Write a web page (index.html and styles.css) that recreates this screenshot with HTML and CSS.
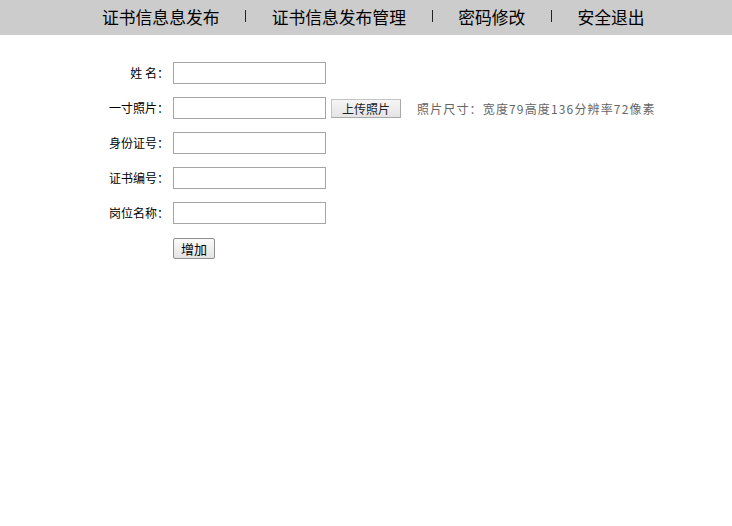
FILE: index.html
```html
<!DOCTYPE html>
<html lang="zh">
<head>
<meta charset="utf-8">
<title>证书信息发布</title>
<link rel="stylesheet" href="styles.css">
</head>
<body>
<div class="topbar">
  <nav class="nav">
    <a class="nav-item" href="#">证书信息息发布</a>
    <span class="sep"></span>
    <a class="nav-item" href="#">证书信息发布管理</a>
    <span class="sep"></span>
    <a class="nav-item" href="#">密码修改</a>
    <span class="sep"></span>
    <a class="nav-item" href="#">安全退出</a>
  </nav>
</div>
<form class="form">
  <div class="row">
    <label class="label">姓 名：</label>
    <input class="field" type="text">
  </div>
  <div class="row">
    <label class="label">一寸照片：</label>
    <input class="field" type="text">
    <button class="btn upload" type="button">上传照片</button>
    <span class="hint">照片尺寸：宽度79高度136分辨率72像素</span>
  </div>
  <div class="row">
    <label class="label">身份证号：</label>
    <input class="field" type="text">
  </div>
  <div class="row">
    <label class="label">证书编号：</label>
    <input class="field" type="text">
  </div>
  <div class="row">
    <label class="label">岗位名称：</label>
    <input class="field" type="text">
  </div>
  <div class="row actions">
    <span class="label"></span>
    <button class="btn add" type="button">增加</button>
  </div>
</form>
</body>
</html>
```

FILE: styles.css
```css
html, body {
  margin: 0;
  padding: 0;
  background: #fff;
  font-family: "Noto Sans CJK SC", "Liberation Sans", sans-serif;
  color: #000;
}

.topbar {
  height: 35px;
  background: #cccccc;
}

.nav {
  display: flex;
  align-items: center;
  height: 35px;
  padding-left: 102px;
  gap: 25.6px;
}

.nav-item {
  font-size: 16.8px;
  line-height: 35px;
  color: #000;
  text-decoration: none;
}

.sep {
  width: 1px;
  height: 12px;
  background: #222;
  margin-top: -4px;
}

.form {
  padding-top: 27px;
  display: flex;
  flex-direction: column;
  gap: 13px;
}

.row {
  display: flex;
  align-items: center;
  height: 22px;
}

.label {
  width: 169px;
  text-align: right;
  font-size: 12px;
  line-height: 22px;
  color: #000;
  flex-shrink: 0;
  margin-right: 4px;
}

.field {
  box-sizing: border-box;
  width: 153px;
  height: 22px;
  margin: 0;
  padding: 0 2px;
  border: 1px solid #a5a5a5;
  background: #fff;
  outline: none;
}

.btn {
  box-sizing: border-box;
  margin: 0;
  font-family: "Noto Sans CJK SC", "Liberation Sans", sans-serif;
  color: #000;
  cursor: pointer;
}

.upload {
  margin-left: 5px;
  width: 70px;
  height: 19px;
  padding: 0;
  font-size: 12px;
  line-height: 17px;
  color: #222;
  border: 1px solid #c4c4c4;
  border-right-color: #a8a8a8;
  border-bottom-color: #a8a8a8;
  background: linear-gradient(#f6f6f6, #e4e4e4);
}

.hint {
  margin-left: 16px;
  font-size: 12px;
  letter-spacing: 1.15px;
  color: #666;
  white-space: nowrap;
}

.actions {
  margin-top: 1px;
  height: 21px;
}

.add {
  width: 42px;
  height: 21px;
  padding: 0;
  font-size: 13px;
  line-height: 19px;
  border: 1px solid #8f8f8f;
  border-radius: 2px;
  background: linear-gradient(#fbfbfb, #e3e3e3);
}
```
